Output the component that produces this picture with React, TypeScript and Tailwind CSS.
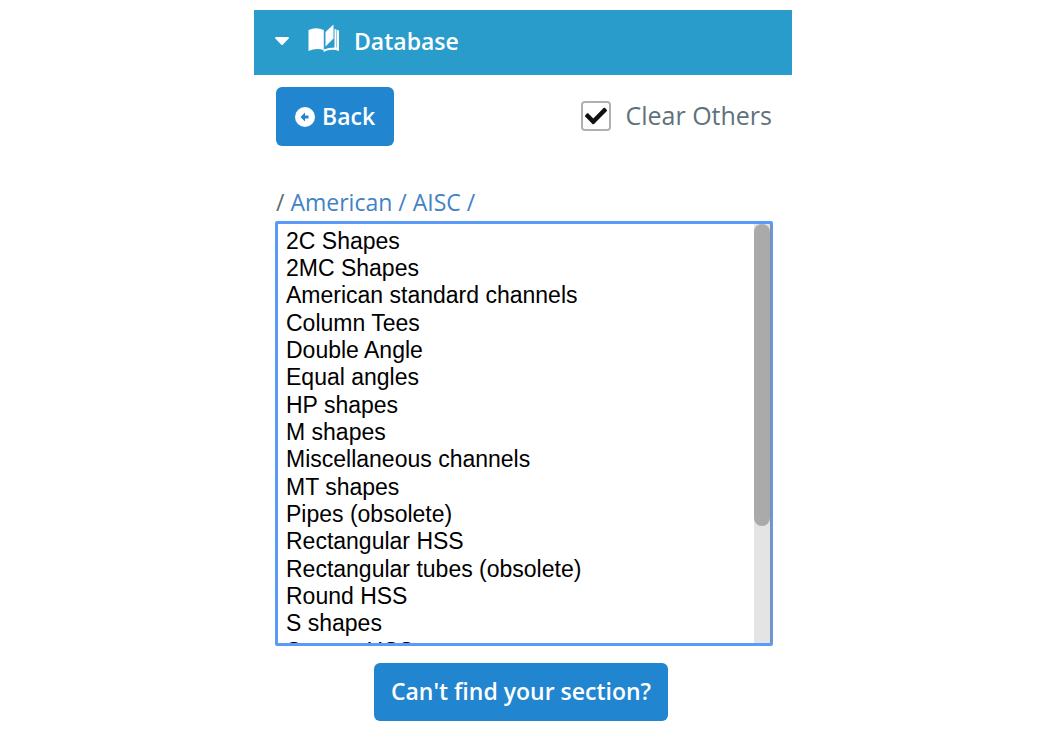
import { useState } from "react";
import { FaCaretDown, FaCheck } from "react-icons/fa";

const sections = [
  "2C Shapes",
  "2MC Shapes",
  "American standard channels",
  "Column Tees",
  "Double Angle",
  "Equal angles",
  "HP shapes",
  "M shapes",
  "Miscellaneous channels",
  "MT shapes",
  "Pipes (obsolete)",
  "Rectangular HSS",
  "Rectangular tubes (obsolete)",
  "Round HSS",
  "S shapes",
  "Square HSS",
  "Square tubes (obsolete)",
  "ST shapes",
  "Unequal angles",
  "W shapes",
  "WT shapes",
];

function BookIcon() {
  return (
    <svg viewBox="0 0 32 30" className="h-[30px] w-8 shrink-0" fill="currentColor" aria-hidden="true">
      <path d="M0.500 6Q8 2.500 15.800 6V26Q8 23.500 0.500 27Z" />
      <path d="M25.500 0.500V14.500L17.500 22.500V8Z" />
      <path d="M26.500 5L28.500 5.500V24H26.500Z" />
      <path d="M29 6L31 6.500V27Q23 24 15.500 28V25.500Q22 23 29 23.500Z" />
    </svg>
  );
}

function BackIcon() {
  return (
    <svg viewBox="0 0 20 20" className="size-5 shrink-0" aria-hidden="true">
      <circle cx="10" cy="10" r="10" fill="#fff" />
      <path d="M5.500 10L10 5.500V8.500H13.500V11.500H10V14.500Z" fill="#2185d0" />
    </svg>
  );
}

// Share of the list that fits in the box, which is also the height of the thumb
const VISIBLE = 0.72;

function SectionList() {
  const [progress, setProgress] = useState(0);

  return (
    <div className="relative">
      <select
        size={15}
        aria-label="Sections"
        onScroll={(e) => {
          const el = e.currentTarget;
          const range = el.scrollHeight - el.clientHeight;
          setProgress(range > 0 ? el.scrollTop / range : 0);
        }}
        className="block h-[425px] w-full overflow-y-scroll rounded-xs border-3 border-[#5b9bf8] bg-white pt-1 pl-2 font-['Liberation_Sans',sans-serif] text-[23px] text-black outline-none [scrollbar-width:none]"
      >
        {sections.map((name) => (
          <option key={name} className="h-[27px] min-h-0 py-0 leading-[27px] nth-[3n]:h-7">
            {name}
          </option>
        ))}
      </select>
      <div className="pointer-events-none absolute inset-y-[3px] right-[2px] w-[17px] border-r border-[#8c8c8c] bg-[#e4e4e4]">
        <div
          className="absolute inset-x-0 rounded-full bg-[#aaa]"
          style={{ height: `${VISIBLE * 100}%`, top: `${progress * (1 - VISIBLE) * 100}%` }}
        />
      </div>
    </div>
  );
}

export default function App() {
  const [clearOthers, setClearOthers] = useState(true);

  return (
    <main className="mx-auto max-w-[538px] pt-2.5 pb-4 font-['Open_Sans',sans-serif]">
      <button type="button" aria-expanded="true" className="flex h-[65px] w-full items-center bg-[#299ccc] px-4 pb-0.5 text-[23px] font-semibold text-white">
        <FaCaretDown className="mb-1 size-6" />
        <span className="mr-3.5 ml-3.5 pb-1.5">
          <BookIcon />
        </span>
        Database
      </button>

      <div className="pt-3 pr-[19px] pl-[21px]">
        <div className="flex items-center justify-between px-px">
          <button type="button" className="flex h-[59px] items-center gap-[7px] rounded-md bg-[#2185d0] px-[19px] text-[23px] font-semibold text-white">
            <BackIcon />
            Back
          </button>
          <label className="flex items-center gap-3.5 pb-0.5 text-[25px] text-[#5f727c]">
            <span className="grid size-[30px] place-items-center">
              <input
                type="checkbox"
                checked={clearOthers}
                onChange={(e) => setClearOthers(e.target.checked)}
                className="col-start-1 row-start-1 size-[30px] appearance-none rounded border-2 border-[#b0b0b0] bg-white"
              />
              {clearOthers && <FaCheck className="pointer-events-none col-start-1 row-start-1 size-[22px] text-[#111]" />}
            </span>
            Clear Others
          </label>
        </div>

        <nav aria-label="Section path" className="mt-[38px] px-px pb-px text-[23px] leading-9 whitespace-pre text-[#4183c4]">
          <span className="text-[#5f6b70]">/ </span>
          <a href="#american">American</a> / <a href="#aisc">AISC</a> /
        </nav>

        <SectionList />

        <div className="mt-[17px] flex justify-center pr-1.5">
          <button type="button" className="h-[58px] rounded-md bg-[#2185d0] px-[17px] pb-0.5 text-[23px] font-semibold text-white">
            Can't find your section?
          </button>
        </div>
      </div>
    </main>
  );
}
